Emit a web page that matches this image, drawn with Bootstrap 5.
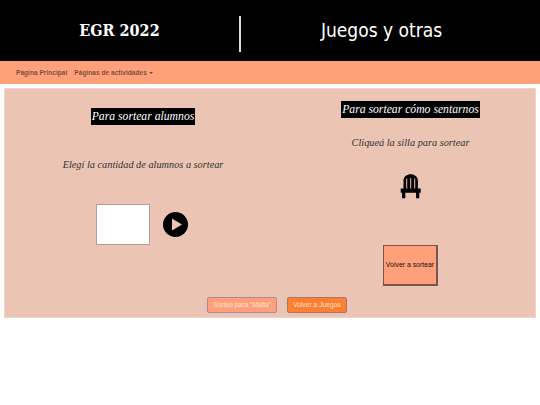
<!DOCTYPE html>
<html lang="es"><head><meta charset="utf-8">
<link rel="stylesheet" href="https://cdn.jsdelivr.net/npm/bootstrap@5.3.0/dist/css/bootstrap.min.css">
<style>
body{font-family:"Liberation Sans",Arial,sans-serif;background:#fff}
.top-band{background:#000;height:61px;color:#fff;padding-top:16px}
.brand-side{width:241px;height:36px;border-right:2px solid #ddd;font:700 16px/30px "DejaVu Serif Condensed","DejaVu Serif",serif}
.title-side{flex:1;padding-right:18px;font:19px/28px "DejaVu Sans Condensed","DejaVu Sans",sans-serif}
.navbar.nav-band{background:#ffa07a;height:23px;padding:0 0 0 12.5px;--bs-navbar-nav-link-padding-x:3.5px}
.nav-band .nav-link{font-size:6.6px;font-weight:700;color:rgba(0,0,0,.55);padding-top:0;padding-bottom:0;line-height:23px}
.nav-band .dropdown-toggle::after{margin-left:2px;border-top-width:2.5px;border-right-width:2.5px;border-left-width:2.5px;vertical-align:.15em}
.panel-main{background:#ebc4b4;margin:4px 4px 0;height:230px;border:1px solid #eed5ca;padding-top:12px}
.col-left{width:276px;padding-top:7px}
.col-right{flex:1;padding-left:5px}
.script-title{width:fit-content;background:#000;color:#fff;font:italic 11.7px/17px "Liberation Serif",serif;padding:0 1px;margin:0 auto}
.script-text{font:italic 10.3px/16px "Liberation Serif",serif;color:#333;margin:0}
.chosen-gap{margin-top:32px}
.box-row{margin-top:31px;padding-right:3px;column-gap:13px}
.num-box{width:54px;height:41px;background:#fff;border:1px solid #b99a9a}
.play-icon{width:25px;height:25px}
.chair-gap{margin-top:17px;margin-bottom:23px}
.chair-icon{display:block;width:22px;height:25px;margin:0 auto 46px}
.again-btn{display:block;width:55px;height:41px;margin:0 auto;background:#ffa07a;border:1px solid #77574b;border-width:1px 2px 2px 1px;font-size:6.9px;padding:0;color:#111;border-radius:0;white-space:nowrap}
.foot-row{margin-top:11px;padding-left:14px;column-gap:10px}
.small-btn{font-size:6.7px;height:16px;padding:0 5px;border-radius:2px;color:#fff;line-height:14px}
.btn-mafia{background:#ffa07a;border:1px solid #a98aa0;color:#ffe0d0}
.btn-juegos{background:#ff7f32;border:1px solid #a07a70;color:#ffe0d0}
.btn-mafia:hover,.btn-juegos:hover{color:#fff}
</style></head><body>
<header class="top-band d-flex align-items-start">
  <div class="brand-side text-center">EGR 2022</div>
  <div class="title-side text-center">Juegos y otras</div>
</header>
<nav class="navbar navbar-expand nav-band">
  <ul class="navbar-nav">
    <li class="nav-item"><a class="nav-link" href="#">Página Principal</a></li>
    <li class="nav-item dropdown"><a class="nav-link dropdown-toggle" href="#" role="button">Páginas de actividades</a></li>
  </ul>
</nav>
<main class="panel-main">
  <div class="d-flex">
    <section class="col-left text-center">
      <h2 class="script-title">Para sortear alumnos</h2>
      <p class="script-text chosen-gap">Elegí la cantidad de alumnos a sortear</p>
      <div class="d-flex align-items-center justify-content-center box-row">
        <input class="num-box" type="text" aria-label="Cantidad">
        <svg class="play-icon" viewBox="0 0 25 25"><circle cx="12.5" cy="12.5" r="12.5" fill="#000"/><path d="M9 6.5 19 12.5 9 18.500Z" fill="#ebc4b4"/></svg>
      </div>
    </section>
    <section class="col-right text-center">
      <h2 class="script-title">Para sortear cómo sentarnos</h2>
      <p class="script-text chair-gap">Cliqueá la silla para sortear</p>
      <svg class="chair-icon" viewBox="0 0 22 25"><path fill="#000" fill-rule="evenodd" d="M3.500 14.600V7C3.500 2.500 7 .3 10.700 .3s7.200 2.200 7.200 6.700v7.600ZM6.200 4.500v10h1v-10ZM10.200 4v10.600h1V4ZM14.200 4.500v10h1v-10ZM.7 14.600h20v4.100h-1.400v5.600H16v-5.600H5.300v5.600H2v-5.600H.7Z"/></svg>
      <button class="again-btn" type="button">Volver a sortear</button>
    </section>
  </div>
  <div class="d-flex justify-content-center foot-row">
    <a class="btn small-btn btn-mafia" href="#">Sorteo para "Mafia"</a>
    <a class="btn small-btn btn-juegos" href="#">Volver a Juegos</a>
  </div>
</main>
</body></html>
